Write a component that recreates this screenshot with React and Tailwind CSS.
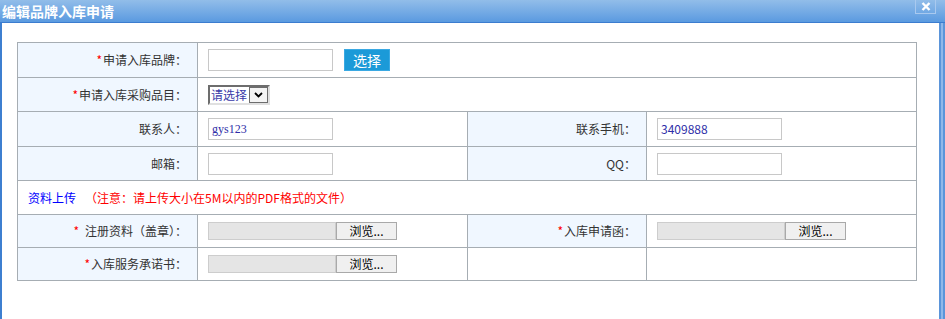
import React from 'react';

const font = { fontFamily: '"Noto Sans CJK SC", "Noto Sans", sans-serif' };

const Star = () => <span className="text-[#f00] text-[12px] leading-none mr-px">*</span>;

const Label = ({ star, children, span = '' }) => (
  <div className={`bg-[#f0f7ff] flex items-center justify-end pr-[10px] text-[12px] text-[#333] ${span}`}>
    {star && <Star />}
    {children}
  </div>
);

const Cell = ({ children, span = '' }) => (
  <div className={`bg-white flex items-center pl-[10px] ${span}`}>{children}</div>
);

const TextBox = ({ value = '', serif = false }) => (
  <div
    className="w-[125px] h-[22px] border border-[#c8c8c8] bg-white flex items-center px-[3px] text-[12px] text-[#2e2ea8]"
    style={serif ? { fontFamily: '"Liberation Serif", serif' } : undefined}
  >
    {value}
  </div>
);

const FileBox = () => (
  <div className="flex items-center h-[18px]">
    <div className="w-[128px] h-[18px] bg-[#e5e5e5] border border-[#cdcdcd]" />
    <div className="w-[61px] h-[18px] bg-[#f0f0f0] border border-[#a9a9a9] flex items-center justify-center text-[12px] text-black leading-none">
      浏览...
    </div>
  </div>
);

export default function App() {
  return (
    <div className="w-[945px] h-[319px] bg-white flex flex-col overflow-hidden" style={font}>
      {/* 标题栏 */}
      <div className="h-[23px] shrink-0 bg-gradient-to-b from-[#92bde9] to-[#5a9ae0] border-b border-[#3b7ccf] flex items-start justify-between">
        <div className="pl-[2px] pt-[1px] text-white font-bold text-[14px] leading-[20px]">编辑品牌入库申请</div>
        <div className="mr-[9px] w-[21px] h-[14px] border border-t-0 border-[#a9c9ef] flex items-center justify-center">
          <svg width="10" height="9" viewBox="0 0 10 9">
            <path d="M1.5 1 L8.5 8 M8.5 1 L1.5 8" stroke="#fff" strokeWidth="2.4" />
          </svg>
        </div>
      </div>

      <div className="flex-1 flex">
        <div className="w-[2px] bg-[#3d7fd0]" />
        <div className="flex-1 pt-[19px] pl-[15px]">
          <div className="w-[900px] bg-[#a6adb3] border border-[#a6adb3] grid grid-cols-[179px_269px_178px_269px] grid-rows-[34px_33px_34px_33px_33px_32px_32px] gap-px">
            <Label star>申请入库品牌：</Label>
            <Cell span="col-span-3">
              <TextBox />
              <div className="ml-[11px] w-[46px] h-[22px] bg-[#1b9ad8] border border-[#3aa9e3] text-white text-[14px] flex items-center justify-center leading-none">
                选择
              </div>
            </Cell>

            <Label star>申请入库采购品目：</Label>
            <Cell span="col-span-3">
              <div className="flex h-[20px] w-[62px] border-2 border-[#6d6d6d] border-r-[#e0e0e0] border-b-[#e0e0e0] bg-white items-center">
                <span className="text-[12px] text-[#3a3aa8] pl-[1px] leading-none">请选择</span>
                <div className="ml-auto w-[19px] h-[16px] border border-[#6d6d6d] bg-[#f4f4f4] flex items-center justify-center">
                  <svg width="9" height="6" viewBox="0 0 9 6">
                    <path d="M1 1 L4.5 4.5 L8 1" stroke="#000" strokeWidth="1.8" fill="none" />
                  </svg>
                </div>
              </div>
            </Cell>

            <Label>联系人：</Label>
            <Cell><TextBox value="gys123" serif /></Cell>
            <Label>联系手机：</Label>
            <Cell><TextBox value="3409888" /></Cell>

            <Label>邮箱：</Label>
            <Cell><TextBox /></Cell>
            <Label>QQ：</Label>
            <Cell><TextBox /></Cell>

            <div className="col-span-4 bg-white flex items-center pl-[10px] text-[12px]">
              <span className="text-[#0000ff]">资料上传</span>
              <span className="text-[#ff0000] ml-[9px]">（注意：请上传大小在5M以内的PDF格式的文件）</span>
            </div>

            <Label><Star /><span className="ml-[5px]">注册资料（盖章）：</span></Label>
            <Cell><FileBox /></Cell>
            <Label star>入库申请函：</Label>
            <Cell><FileBox /></Cell>

            <Label star>入库服务承诺书：</Label>
            <Cell><FileBox /></Cell>
            <div className="bg-white" />
            <div className="bg-white" />
          </div>
        </div>
        <div className="w-[6px] bg-[#5b95da] flex justify-center">
          <div className="w-[2px] bg-[#8fb8ea]" />
        </div>
      </div>
    </div>
  );
}
